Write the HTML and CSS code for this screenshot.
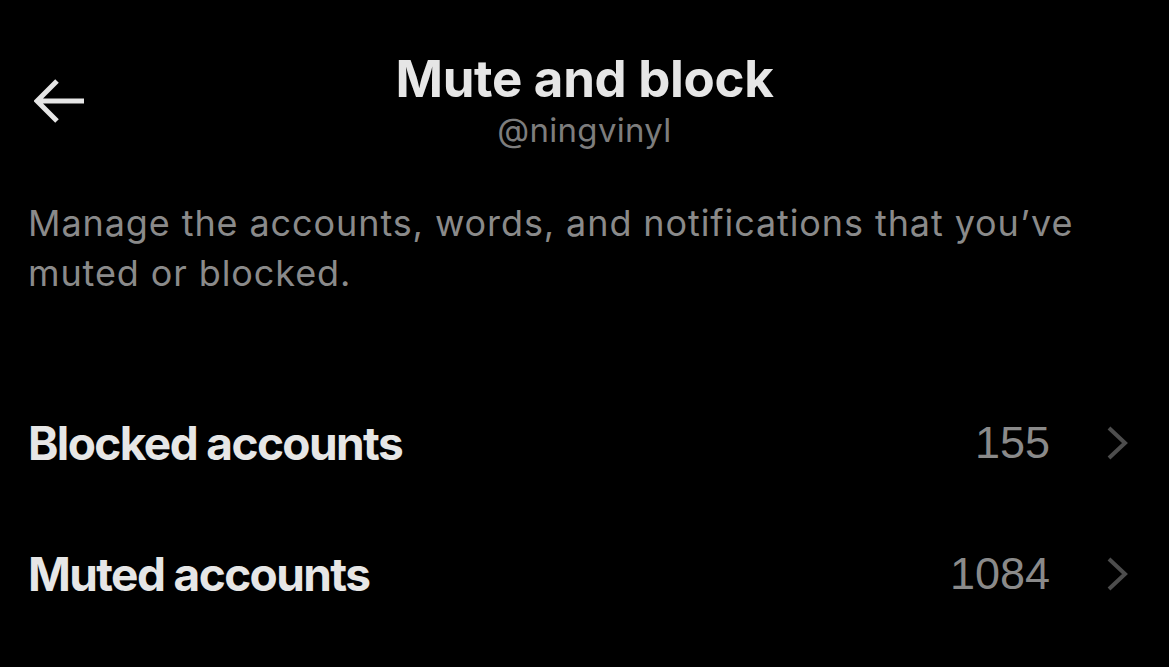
FILE: index.html
```html
<!DOCTYPE html>
<html lang="en">
<head>
<meta charset="utf-8">
<title>Mute and block</title>
<link rel="stylesheet" href="styles.css">
</head>
<body>
<div class="screen">
  <header class="header">
    <div class="back">
      <svg width="52" height="46" viewBox="0 0 52 46" aria-hidden="true">
        <path d="M3 23 H50 M23 3 L3 23 L23 43" fill="none" stroke="#e6e6e6" stroke-width="5" stroke-linecap="butt" stroke-linejoin="miter"/>
      </svg>
    </div>
    <div class="titles">
      <h1 class="title">Mute and block</h1>
      <div class="handle">@ningvinyl</div>
    </div>
    <div class="spacer"></div>
  </header>
  <p class="desc">Manage the accounts, words, and notifications that you’ve muted or blocked.</p>
  <ul class="list">
    <li class="row">
      <span class="label">Blocked accounts</span>
      <span class="count">155</span>
      <svg class="chev" width="22" height="34" viewBox="0 0 22 34" aria-hidden="true">
        <path d="M2 2 L18 17 L2 32" fill="none" stroke="#4d4d4d" stroke-width="4"/>
      </svg>
    </li>
    <li class="row">
      <span class="label">Muted accounts</span>
      <span class="count">1084</span>
      <svg class="chev" width="22" height="34" viewBox="0 0 22 34" aria-hidden="true">
        <path d="M2 2 L18 17 L2 32" fill="none" stroke="#4d4d4d" stroke-width="4"/>
      </svg>
    </li>
  </ul>
</div>
</body>
</html>
```
FILE: styles.css
```css
html, body {
  margin: 0;
  padding: 0;
  background: #000;
}
body {
  font-family: Inter, "Noto Sans", sans-serif;
  color: #e6e6e6;
}
.screen {
  width: 1169px;
  height: 667px;
  overflow: hidden;
  background: #000;
}
.header {
  display: grid;
  grid-template-columns: 1fr auto 1fr;
  align-items: start;
  padding-top: 49px;
}
.back {
  padding-left: 34px;
  padding-top: 29px;
}
.back svg { display: block; }
.titles {
  text-align: center;
}
.title {
  margin: 0;
  font-size: 51px;
  font-weight: 700;
  line-height: 60px;
  letter-spacing: -0.3px;
  color: #e6e6e6;
}
.handle {
  font-size: 33px;
  line-height: 42px;
  color: #7d7d7d;
  letter-spacing: 0.3px;
}
.desc {
  margin: 47px 0 0 0;
  padding: 0 28px;
  font-size: 36px;
  line-height: 50px;
  color: #8a8a8a;
  letter-spacing: 0.9px;
}
.list {
  list-style: none;
  margin: 79px 0 0 0;
  padding: 0;
}
.row {
  display: flex;
  align-items: center;
  height: 131px;
  padding: 0 40px 0 28px;
}
.label {
  flex: 1;
  font-size: 46px;
  font-weight: 700;
  color: #e6e6e6;
  letter-spacing: -1.6px;
}
.count {
  font-family: "Liberation Sans", Arial, sans-serif;
  font-size: 45px;
  color: #8a8a8a;
  margin-right: 57px;
}
.chev { display: block; }
```
